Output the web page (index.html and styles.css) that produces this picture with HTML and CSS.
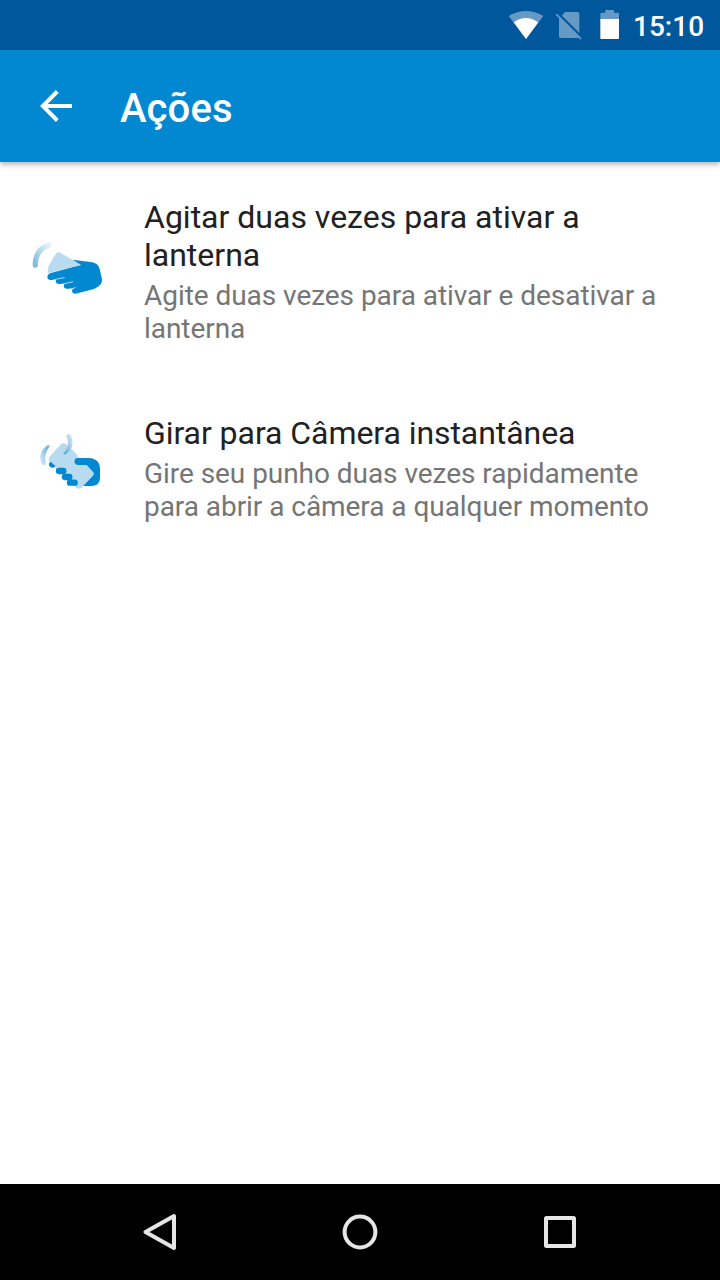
FILE: index.html
```html
<!DOCTYPE html>
<html lang="pt-BR">
<head>
<meta charset="utf-8">
<title>Ações</title>
<link rel="stylesheet" href="styles.css">
</head>
<body>
<div class="screen">
  <div class="status-bar">
    <svg class="status-icons" viewBox="0 0 360 150" aria-hidden="true">
      <path d="M26 48Q78 18 130 48L78 117Z" fill="#6699c4"/>
      <path d="M41 67Q78 41 115 67L78 117Z" fill="#fff"/>
      <path d="M195 36H232Q238 36 238 42V99L186 47Z" fill="#6699c4"/>
      <path d="M171 41L245 115L241 119L236 114H183Q177 114 177 108V54L167 45Z" fill="#6699c4"/>
      <path d="M301 58V42Q301 38 305 38H316V30H342V38H353Q357 38 357 42V58Z" fill="#6699c4"/>
      <path d="M301 57H357V114Q357 117 354 117H304Q301 117 301 114Z" fill="#fff"/>
    </svg>
    <span class="clock">15:10</span>
  </div>
  <header class="app-bar">
    <svg class="back" viewBox="0 0 32 32" aria-label="Voltar">
      <path d="M32 16H4M17.3 1.5L2.8 16L17.3 30.5" fill="none" stroke="#fff" stroke-width="3.9"/>
    </svg>
    <h1 class="app-title">Ações</h1>
  </header>
  <main class="actions">
    <section class="action">
      <svg class="action-icon" viewBox="0 0 300 240" aria-hidden="true">
        <defs>
          <linearGradient id="shake" x1="0" y1="1" x2="1" y2="0">
            <stop offset="0" stop-color="#7fbce0"/><stop offset="1" stop-color="#e4f2fa"/>
          </linearGradient>
        </defs>
        <path d="M46 105C45 77 60 53 86 46" fill="none" stroke="url(#shake)" stroke-width="16" stroke-linecap="round"/>
        <path d="M158 89L217 97Q235 101 239 117L246 148Q247 161 236 169Q226 177 210 180L167 191Q157 192 156 184Q156 180 160 175L143 176Q132 178 131 169Q131 163 137 160L121 162Q109 164 107 155Q106 149 112 147L94 150Q83 151 82 141Q82 133 90 130L180 105Z" fill="#0288d1"/>
        <path d="M107 72Q113 64 122 69L184 105L83 130Q82 117 87 106Z" fill="#b8dbf0"/>
        <path d="M111 147L133 143M136 160L158 156M160 175L166 173" stroke="#fff" stroke-width="2" stroke-linecap="round"/>
      </svg>
      <div class="action-text">
        <h2 class="action-title">Agitar duas vezes para ativar a lanterna</h2>
        <p class="action-summary">Agite duas vezes para ativar e desativar a lanterna</p>
      </div>
    </section>
    <section class="action action-camera">
      <svg class="action-icon" viewBox="0 0 300 240" aria-hidden="true">
        <defs>
          <linearGradient id="twist-left" x1="1" y1="0" x2="0" y2="1">
            <stop offset="0" stop-color="#65add5"/><stop offset="1" stop-color="#dceef9"/>
          </linearGradient>
          <linearGradient id="twist-right" x1="0" y1="1" x2="1" y2="0">
            <stop offset="0" stop-color="#58a6d2"/><stop offset="1" stop-color="#dceef9"/>
          </linearGradient>
        </defs>
        <path d="M172 114H207Q240 116 240 148V174Q240 196 216 198H190Z" fill="#0288d1"/>
        <path d="M123 73Q131 67 139 73L173 105V114Q163 116 162 124Q163 134 173 135H200L220 157Q224 162 219 167L186 202Q180 209 171 205L90 127Q83 120 88 111Z" fill="#b8dbf0"/>
        <path d="M173 114H207V135H173Q163 133 163 124Q163 115 173 114Z" fill="#0288d1"/>
        <path d="M92 125L106 138Q103 145 96 143Q85 140 87 130Z" fill="#0288d1"/>
        <path d="M117 153H130M135 171H148M150 188H164" stroke="#0288d1" stroke-width="19" stroke-linecap="round"/>
        <path d="M83 76Q88 74 89 79C77 97 73 110 77 126Q78 137 69 136C53 116 62 88 83 76Z" fill="url(#twist-left)"/>
        <path d="M139 49Q141 41 150 43C165 67 157 92 136 104Q129 104 131 99C144 84 149 68 139 49Z" fill="url(#twist-right)"/>
      </svg>
      <div class="action-text">
        <h2 class="action-title">Girar para Câmera instantânea</h2>
        <p class="action-summary">Gire seu punho duas vezes rapidamente para abrir a câmera a qualquer momento</p>
      </div>
    </section>
  </main>
  <nav class="nav-bar">
    <svg class="nav-icon" viewBox="0 0 40 40"><path d="M34 4L5.5 20L34 36Z"/></svg>
    <svg class="nav-icon" viewBox="0 0 40 40"><circle cx="20" cy="20" r="15.4"/></svg>
    <svg class="nav-icon" viewBox="0 0 40 40"><rect x="6" y="6" width="28" height="28" rx=".5"/></svg>
  </nav>
</div>
</body>
</html>
```
FILE: styles.css
```css
* { box-sizing: border-box; }
body, h1, h2, p { margin: 0; font-weight: 400; }
body { font-family: Roboto, sans-serif; }
svg { display: block; flex: none; }
.screen {
  width: 720px;
  height: 1280px;
  display: flex;
  flex-direction: column;
  background: #fff;
  overflow: hidden;
}
.status-bar {
  height: 50px;
  flex: none;
  display: flex;
  justify-content: flex-end;
  padding-right: 17px;
  background: #01579b;
}
.status-icons { width: 120px; height: 50px; margin-right: 13px; }
.clock {
  width: 70px;
  padding-top: 10px;
  color: #fff;
  font-size: 28px;
  font-weight: 500;
  line-height: 33px;
  white-space: nowrap;
}
.app-bar {
  height: 112px;
  flex: none;
  display: flex;
  align-items: center;
  gap: 48px;
  padding-left: 40px;
  background: #0288d1;
  box-shadow: 0 3px 5px rgba(0, 0, 0, .27);
}
.back { width: 32px; height: 32px; }
.app-title {
  padding-top: 4px;
  color: #fff;
  font-size: 40px;
  font-weight: 500;
  line-height: 47px;
  letter-spacing: .1px;
}
.actions { flex: 1; padding-top: 36px; }
.action { display: flex; gap: 24px; padding: 0 48px 69px 20px; }
.action-icon { width: 100px; height: 80px; margin-top: 32px; }
.action-camera .action-icon { margin-top: 6px; }
.action-title { color: #212121; font-size: 32px; line-height: 38px; }
.action-camera .action-title { letter-spacing: -.06px; }
.action-summary {
  margin-top: 5px;
  color: #757575;
  font-size: 28px;
  line-height: 33px;
  letter-spacing: -.05px;
}
.nav-bar {
  height: 96px;
  flex: none;
  display: flex;
  align-items: center;
  justify-content: center;
  gap: 160px;
  background: #000;
}
.nav-icon { width: 40px; height: 40px; }
.nav-icon * {
  fill: none;
  stroke: #e6e6e6;
  stroke-width: 4;
  stroke-linejoin: round;
}
```
